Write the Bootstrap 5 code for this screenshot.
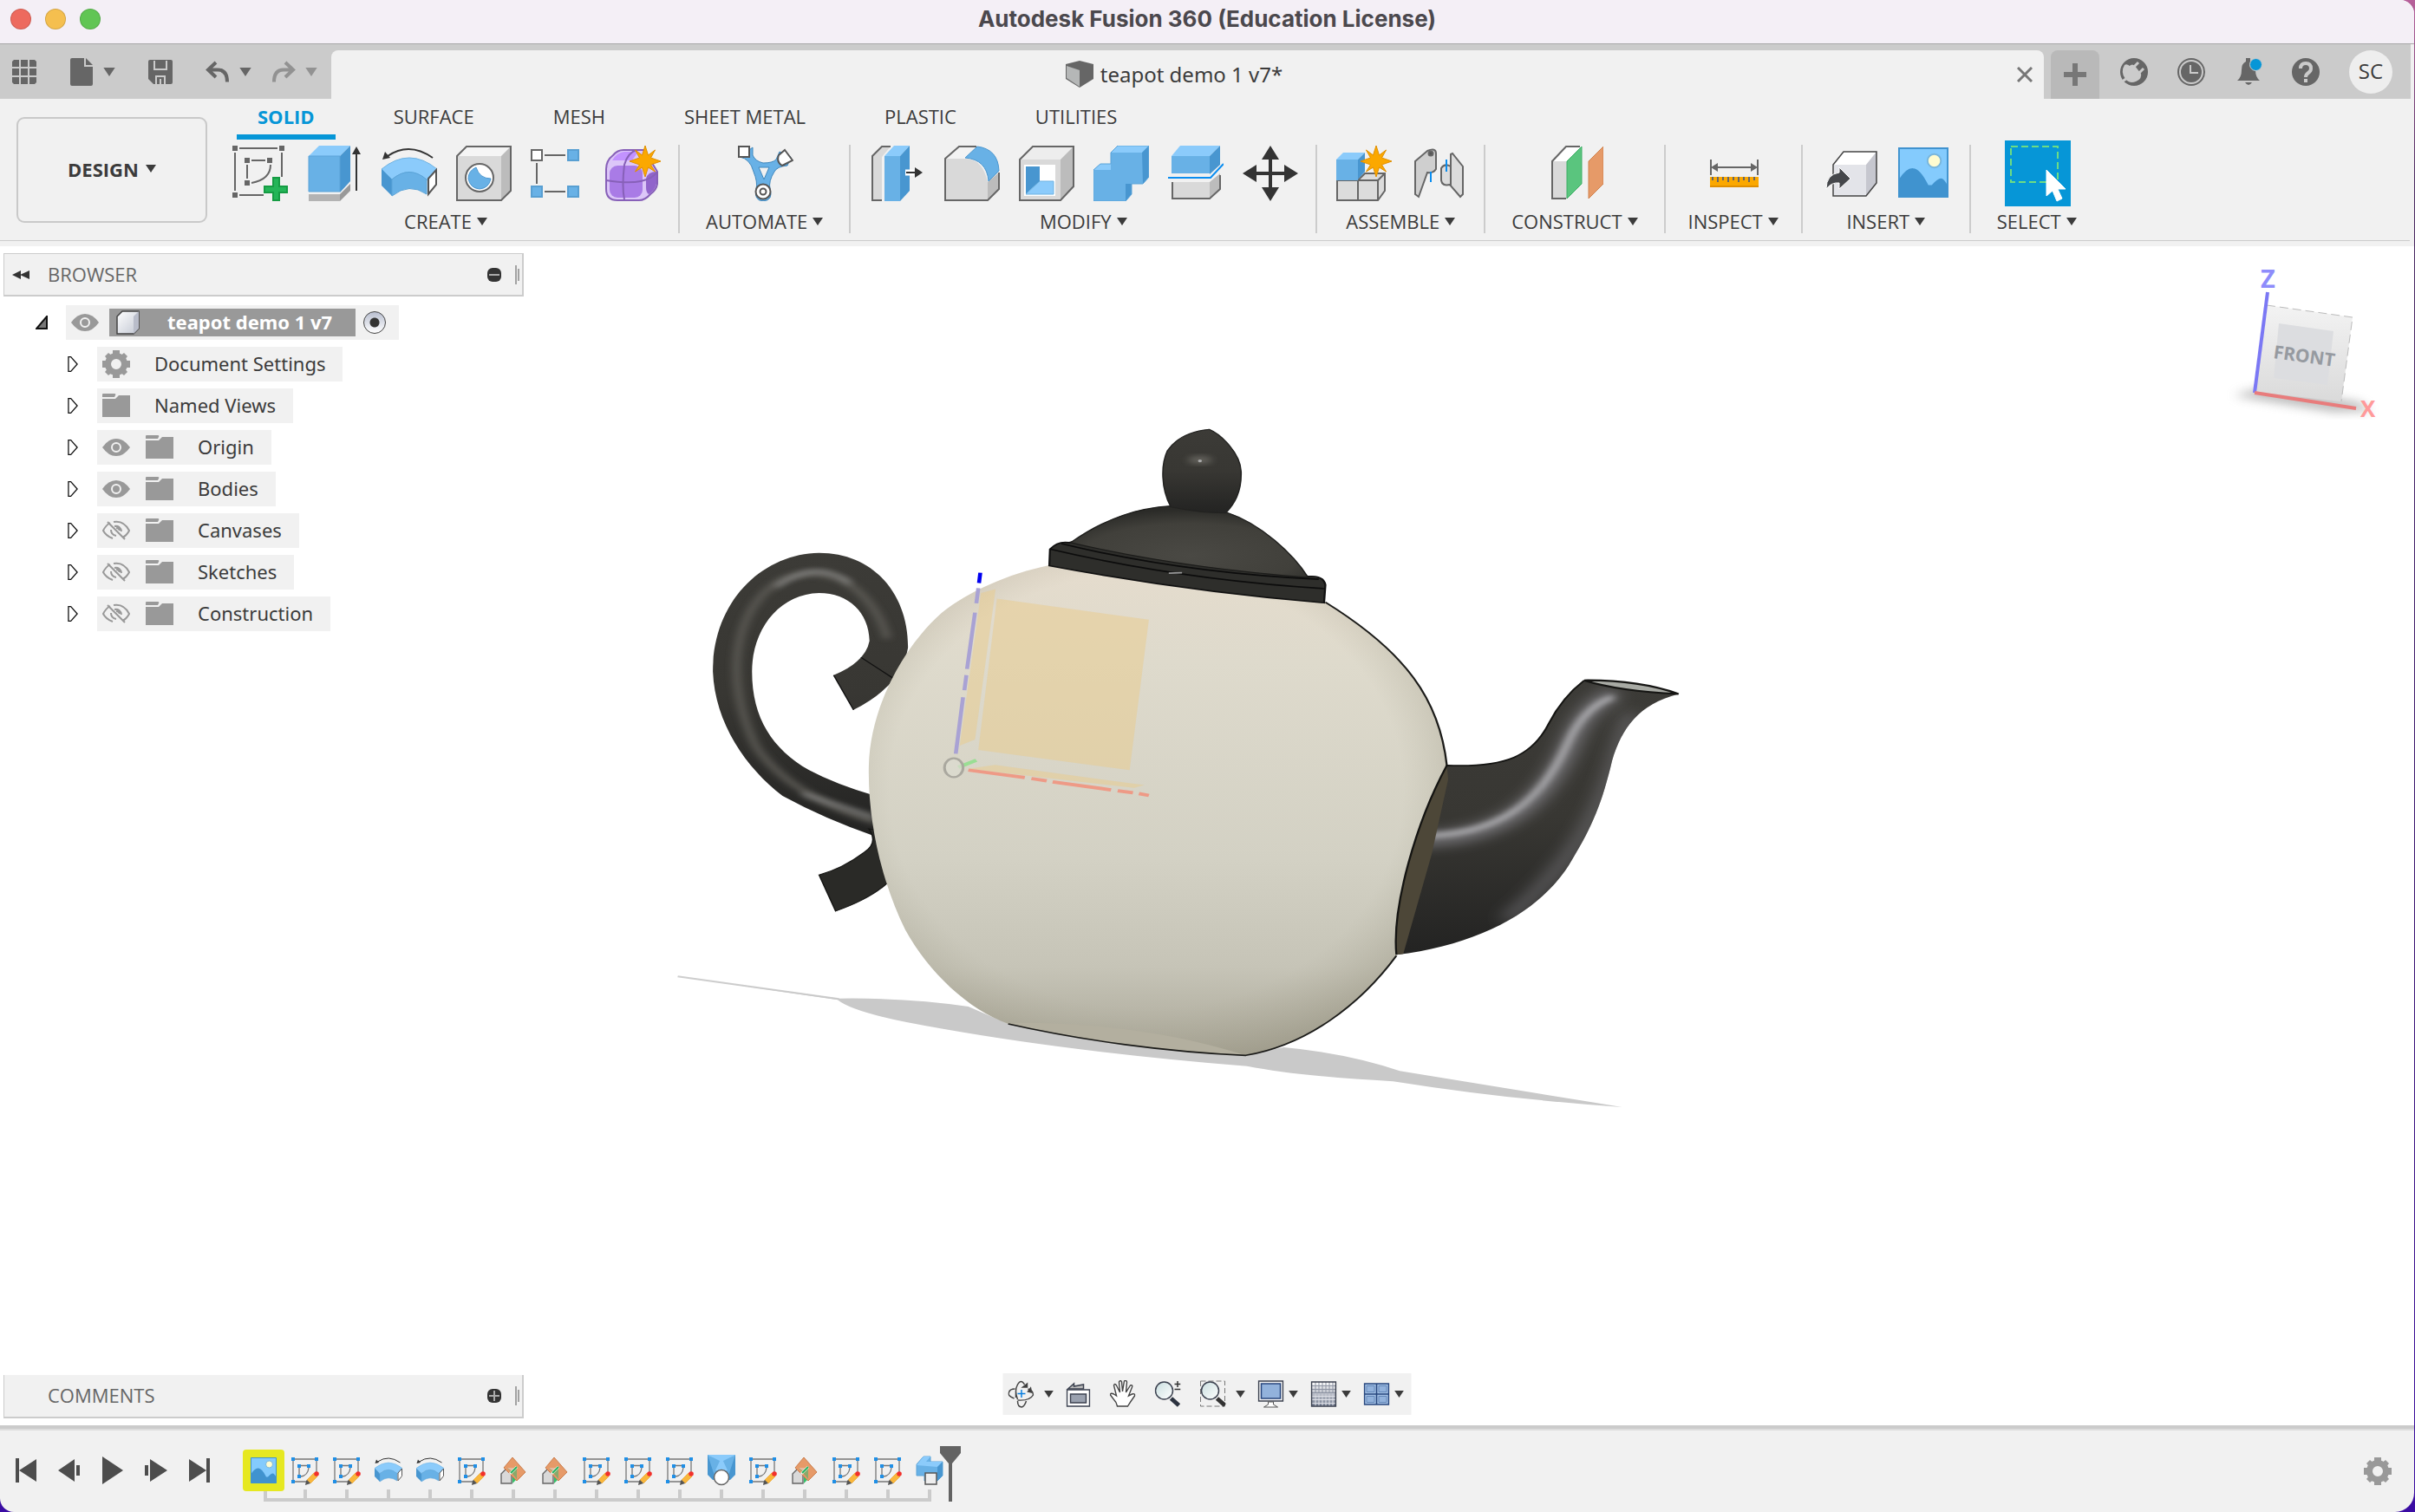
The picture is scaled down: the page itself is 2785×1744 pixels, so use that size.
<!DOCTYPE html>
<html lang="en">
<head>
<meta charset="utf-8">
<meta name="viewport" content="width=device-width, initial-scale=1">
<title>Autodesk Fusion 360 (Education License)</title>
<link href="https://cdn.jsdelivr.net/npm/bootstrap@5.3.0/dist/css/bootstrap.min.css" rel="stylesheet">
<script src="https://cdn.jsdelivr.net/npm/bootstrap@5.3.0/dist/js/bootstrap.bundle.min.js"></script>
<style>
body{font-family:"Open Sans","Noto Sans",sans-serif;font-size:22px;line-height:24px;color:#3b3b3b;background:linear-gradient(#b7609a,#4a2a60 12%,#3a1470 60%,#3a0ca3)}
.app-window{margin-right:1px;background:#f1f1f1;border-radius:0 16px 22px 16px;overflow:hidden}
.app-window .btn{color:inherit;border:0;border-radius:0;padding:0;font-size:22px;line-height:24px;display:inline-flex;align-items:center;justify-content:center}
svg{display:block;flex:none}
.title-strip{height:51px;background:#f4eff6;border-bottom:1px solid #a8a8a8;padding-left:12px}
.title-strip h1{font:700 26px/44px Inter,sans-serif;color:#4b484d}
.light{width:24px;height:24px;border-radius:50%;border:1px solid #0002;padding:0;margin-top:10px;margin-right:16px}
.light-r{background:#ed6a5e}.light-y{background:#f5bf4f}.light-g{background:#61c554}
.doc-strip{height:63px;background:#cbcbcb;margin-right:4px}
.quick{width:382px;padding-left:14px;gap:38px;color:#666}
.quick .pair{gap:11px}
.quick .redo{margin-left:-15px}
.faded{color:#929292}
.doc-tab{margin-top:7px;background:#f1f1f1;border-radius:8px 8px 0 0;padding-right:13px;font:24px/30px "Noto Sans",sans-serif}
.add-tab{margin:7px 0 0 8px;width:56px;background:#b9b9b9!important;border-radius:8px 8px 0 0!important}
.account{padding-left:24px;padding-right:21px;gap:34px;color:#666}
.account .avatar{width:50px;height:50px;border-radius:50%;background:#eee;color:#3b3b3b;font-size:24px;padding-bottom:2px}
.ribbon{height:164px;border-bottom:1px solid #ccc;margin-right:5px}
.app-window .workspace{width:220px;height:122px;margin:21px 7px 0 19px;border:2px solid #c9c9c9;border-radius:9px;font-weight:700;gap:8px;padding-bottom:3px}
.tool-tabs{padding-left:27px;gap:43px}
.tool-tabs a{display:block;padding:5px 24px 6px;line-height:30px;border-bottom:6px solid transparent;color:#3b3b3b;text-decoration:none}
.tool-tabs a.on{font-weight:700;color:#0696d7;border-color:#0696d7}
.tool-groups{margin-top:6px;height:102px}
.tool-group{border-right:2px solid #ccc}
.tool-group:last-child{border:0}
.tool-icons{gap:22px;padding:1px 20px 0 22px}
.app-window .tool-label{gap:6px;margin:0 30px;padding-bottom:2px}
.app-window .tool-label.snug{margin:0 26px}
.pick{margin:-6px;background:#0696d7!important}
.under{height:6px}
.canvas{background:#fff;border-bottom:4px solid #cbcbcb;min-height:0}
.scene{position:absolute;inset:0;width:100%;height:100%}
.palette{width:600px;height:50px;margin-left:4px;background:#f1f1f1;border:1px solid #ccc;border-width:1px 2px 2px 1px;color:#666;padding:0 3px 0 9px}
.palette h2{font-size:22px;line-height:24px;margin:0 0 0 21px;padding-bottom:2px}
.palette .no-toggle{margin-left:41px}
.tree{margin:10px 0 0;padding:0;font-family:"Noto Sans",sans-serif}
.tree li{height:40px;margin-bottom:8px;margin-left:78px}
.tree li.root{margin-left:41px}
.node{height:40px;background:#f1f1f1;padding:0 20px 0 6px;margin-left:22px;gap:18px}
.node span{margin-left:10px;padding-bottom:2px}
.root .node{margin-left:21px;padding-right:15px;gap:0}
.root .chosen{height:32px;margin:0 9px 0 12px;width:284px;background:#999;color:#fff;font-weight:700;padding-left:8px;gap:21px}
.root input{appearance:none;width:26px;height:26px;margin:0;border:1px solid #444;border-radius:50%;background:radial-gradient(circle,#333 5px,#0000 6px),linear-gradient(#b9bfd0,#fff)}
.viewbar{position:absolute;left:50%;bottom:12px;transform:translateX(-50%);height:48px;background:#f1f1f1;padding:0 8px 0 6px}
.viewbar .btn+.btn{margin-left:22px}
.viewbar .btn+.far{margin-left:11px}
.viewbar .btn+.near{margin-left:5px}
.viewbar .near+.btn,.viewbar .far+.btn{margin-left:14px}
.history{height:96px;border-top:2px solid #ddd}
.transport{padding-left:5px}
.transport .btn{width:50px;height:92px;color:#4d4d4d}
.steps{margin:22px 0 0 25px;padding:0;height:60px;position:relative}
.steps::after{content:"";position:absolute;left:24px;right:22px;bottom:0;height:4px;background:#cbcbcb}
.steps li{width:48px;height:60px;position:relative}
.steps li::after{content:"";position:absolute;left:22px;width:4px;top:46px;height:12px;background:#cbcbcb}
.steps li:first-child::after{left:24px}
.steps .btn{width:48px;height:48px;position:relative}
.steps .first{background:#e6e821;border-radius:4px;z-index:1}
.playhead{margin:18px 0 0 -12px;z-index:1}
.history .prefs{margin-right:26px}
</style>
</head>
<body>
<svg width="0" height="0" class="position-absolute" aria-hidden="true">
<defs>
<symbol id="caret" viewBox="0 0 12 9"><path d="M0 0h12L6 9z" fill="currentColor"/></symbol>
<symbol id="gear" viewBox="0 0 32 32"><g fill="#999"><path fill-rule="evenodd" d="M16 3a13 13 0 1 0 0 26a13 13 0 1 0 0-26M16 10a6 6 0 1 1 0 12a6 6 0 1 1 0-12"/><path d="M12 0h8v7h-8zM12 25h8v7h-8zM0 12h7v8H0zM25 12h7v8h-7zM3 7l4-4 5 4-5 5zM20 7l5-4 4 4-4 5zM3 25l4-5 5 5-5 4zM20 25l5-5 4 5-4 4z"/></g></symbol>
<symbol id="folder" viewBox="0 0 32 32"><path d="M0 3q0-1 1-1h13q2 0 1 2l-1 2H0z M0 8h15l4-4h13v25H0z" fill="#999"/></symbol>
<symbol id="eye" viewBox="0 0 32 32"><path d="M0 16Q7 6 16 6t16 10Q25 26 16 26T0 16" fill="#999"/><circle cx="16" cy="16" r="5" fill="#999" stroke="#f1f1f1" stroke-width="2"/></symbol>
<symbol id="eyeoff" viewBox="0 0 32 32"><g fill="none" stroke="#999" stroke-width="2"><path d="M9 7Q4 10 1 16q3 6 11 9M13 6q12-2 18 10-3 6-8 8M10 15q0 6 6 7M14 11q7-1 8 6M16 13q3 0 4 3M6 6l20 20"/></g></symbol>
<symbol id="expand" viewBox="0 0 13 20"><path d="M1 1h3l8 9-8 9H1z" fill="#fff" stroke="#111" stroke-width="1.4"/></symbol>
<symbol id="revolve" viewBox="0 0 64 64"><path d="M0 27Q32 1 64 27L52 40Q32 22 12 39z" fill="#8bcbfb" stroke="#6fb3e2"/><path d="M0 27l12 12v19L0 46z" fill="#4896d0"/><path d="M12 39Q32 22 52 39v17Q32 42 12 58z" fill="#68b1e6" stroke="#5aa3d8"/><path d="M54 38l9-10v17l-9 11z" fill="#fff" stroke="#555" stroke-width="2"/><path d="M59 14Q32-5 7 12" fill="none" stroke="#333" stroke-width="2"/><path d="M1 16L4 7l6 7z" fill="#333"/></symbol>
<symbol id="sketch" viewBox="0 0 32 32"><path d="M4 3h23M2 5v22M29 5v14M4 29h13M11 10.500h7M9 13v8M20 13q-1 9-9 10" fill="none" stroke="#777" stroke-width="1.300"/><path d="M0 1h4v4H0zM27 1h4v4h-4zM0 27h4v4H0zM7 9h4v4H7zM18 9h4v4h-4zM7 21h4v4H7z" fill="#1f8fe6"/><path d="M18 27l8-8 4 4-8 8z" fill="#f9b73c" stroke="#e89a1c" stroke-width=".6"/><path d="M18 27l4 4-6 2 1-5z" fill="#555"/><circle cx="29" cy="20" r="2.800" fill="#f2302b"/></symbol>
<symbol id="plane" viewBox="0 0 32 32"><path d="M2 31V20l6-6h6v17z" fill="#d9d9d9" stroke="#666" stroke-width="1.4"/><path d="M15 31v-9l4-4v9z" fill="#35c069"/><path d="M15 1l15 17-10 10L5 13z" fill="#e69a68" stroke="#ca7d4b"/><path d="M9 13h11v13z" fill="#8aa86b"/><path d="M9 13h11l-5 5z" fill="#e5b9a0"/><path d="M12 20l8-8" stroke="#fff" stroke-width="3"/><path d="M13 19l7-7" stroke="#24b15b" stroke-width="2"/></symbol>
<symbol id="picture" viewBox="0 0 60 60"><path d="M0 0h60v60H0z" fill="#84cbfd"/><path d="M1 38Q10 24 18 25q8 0 18 20l4 0q7-8 11-8 4 0 8 9v13H1z" fill="#4093cf"/><circle cx="43" cy="16" r="8" fill="#fffcd0" stroke="#79b6dc" stroke-width="2"/><path d="M1 1h58v58H1z" fill="none" stroke="#4093cf" stroke-width="2"/></symbol>
<symbol id="spark" viewBox="0 0 36 36"><path d="M18 0l3.500 11 8-6-5 9 11.500 4-11.500 4 5 8-8-5L18 36l-3.500-11-8 5 5-8L0 18l11.500-4-5-9 8 6z" fill="#fba800" stroke="#e08f00"/></symbol>
<linearGradient id="gPlate" x1="0" y1="0" x2="1" y2="1"><stop stop-color="#fff"/><stop offset="1" stop-color="#c3c8d3"/></linearGradient>
<linearGradient id="gGrid" x1="0" y1="0" x2="0" y2="1"><stop stop-color="#fff"/><stop offset="1" stop-color="#717a8e"/></linearGradient>
<linearGradient id="gLens" x1="0" y1="0" x2="1" y2="1"><stop stop-color="#c9dedf"/><stop offset="1" stop-color="#fff"/></linearGradient>
</defs>
</svg>

<div class="app-window vh-100 d-flex flex-column">
<header class="title-strip d-flex position-relative">
<button class="light light-r" aria-label="Close window"></button><button class="light light-y" aria-label="Minimize window"></button><button class="light light-g" aria-label="Zoom window"></button>
<h1 class="position-absolute start-50 translate-middle-x m-0">Autodesk Fusion 360 (Education License)</h1>
</header>

<div class="doc-strip d-flex">
<div class="quick d-flex align-items-center">
<button class="btn" aria-label="Data panel"><svg width="28" height="28" fill="currentColor"><path d="M2 0h6v8H0V2zM10 0h8v8h-8zM20 0h6l2 2v6h-8zM0 10h8v8H0zM10 10h8v8h-8zM20 10h8v8h-8zM0 20h8v8H2l-2-2zM10 20h8v8h-8zM20 20h8v6l-2 2h-6z"/></svg></button>
<button class="btn pair" aria-label="File"><svg width="28" height="32" fill="currentColor"><path d="M3 0h14v10h10v20q0 2-2 2H3q-2 0-2-2V2q0-2 2-2M19 0l8 8h-8z"/></svg><svg width="14" height="10"><use href="#caret"/></svg></button>
<button class="btn" aria-label="Save"><svg width="28" height="28"><path d="M2 0h24q2 0 2 2v24q0 2-2 2H6l-6-6V2q0-2 2-2" fill="currentColor"/><path d="M7 1v10h14V1M9 28v-9h10v9M14 22v6" fill="none" stroke="#cbcbcb" stroke-width="2"/></svg></button>
<button class="btn pair" aria-label="Undo"><svg width="28" height="26" fill="none" stroke="currentColor" stroke-width="4"><path d="M12 2L3 10.500 12 19M4 10.500h10q11 0 11 14"/></svg><svg width="14" height="10"><use href="#caret"/></svg></button>
<button class="btn pair redo" aria-label="Redo"><svg class="faded" width="28" height="26" fill="none" stroke="currentColor" stroke-width="4"><path d="M16 2l9 8.500-9 8.500M24 10.500H14q-11 0-11 14"/></svg><svg class="faded" width="14" height="10"><use href="#caret"/></svg></button>
</div>
<div class="doc-tab flex-grow-1 d-flex align-items-center">
<div class="flex-grow-1 d-flex justify-content-center align-items-center gap-2"><svg width="32" height="32"><path d="M0 4l16-4 16 4v17L16 31 0 21z" fill="#666"/><path d="M1 6l15 5v19L1 20z" fill="#b5b7b7"/></svg><span>teapot demo 1 v7*</span></div>
<button class="btn" aria-label="Close tab"><svg width="18" height="18" stroke="#777" stroke-width="3"><path d="M1 1l16 16M17 1L1 17"/></svg></button>
</div>
<button class="btn add-tab" aria-label="New tab"><svg width="26" height="26" stroke="#777" stroke-width="6"><path d="M13 0v26M0 13h26"/></svg></button>
<div class="account d-flex align-items-center">
<button class="btn" aria-label="Extensions"><svg width="32" height="32"><circle cx="16" cy="16" r="16" fill="#666"/><path d="M5 8q3-2 7 2l9 11q1 3-3 6-7 3-12-3-6-8-1-16" fill="#cbcbcb"/><path d="M9 11q4-6 8-2l7 9q1 5-4 8-6 3-10-3-4-7-1-12" fill="#cbcbcb"/><path d="M15 11l6-6M21 18l6-6" stroke="#cbcbcb" stroke-width="3"/><path d="M1 28l7-5" stroke="#cbcbcb" stroke-width="3"/></svg></button>
<button class="btn" aria-label="Job status"><svg width="32" height="32"><circle cx="16" cy="16" r="15" fill="none" stroke="#666" stroke-width="2"/><circle cx="16" cy="16" r="12" fill="#666"/><path d="M15 8v9h9" fill="none" stroke="#cbcbcb" stroke-width="2"/></svg></button>
<button class="btn" aria-label="Notifications"><svg width="32" height="32"><path d="M3 26q5-4 5-12 0-8 5-10V0h5v4q6 3 6 10 0 8 5 12zM12 28h8q-4 6-8 0" fill="#666"/><circle cx="24.500" cy="7.500" r="7" fill="#0696d7" stroke="#cbcbcb"/></svg></button>
<button class="btn" aria-label="Help"><svg width="32" height="32"><circle cx="16" cy="16" r="16" fill="#666"/><path d="M10 12q0-6 6-6t6 6q0 3-3 5t-3 5" fill="none" stroke="#cbcbcb" stroke-width="4"/><path d="M14 24h4v4h-4z" fill="#cbcbcb"/></svg></button>
<button class="btn avatar">SC</button>
</div>
</div>

<div class="ribbon d-flex align-items-start">
<button class="btn workspace">DESIGN <svg width="12" height="9"><use href="#caret"/></svg></button>
<div>
<nav class="tool-tabs d-flex"><a class="on" href="#">SOLID</a><a href="#">SURFACE</a><a href="#">MESH</a><a href="#">SHEET METAL</a><a href="#">PLASTIC</a><a href="#">UTILITIES</a></nav>
<div class="tool-groups d-flex">
<section class="tool-group d-flex flex-column justify-content-between align-items-center">
<div class="tool-icons d-flex">
<button class="btn" aria-label="Create sketch"><svg width="64" height="64"><path d="M8 3h44M3 8v44M57 8v28M8 57h28M22 17h16M17 22v16M22 43q22-4 22-21" fill="none" stroke="#666" stroke-width="2"/><path d="M0 0h6v6H0zM54 0h6v6h-6zM0 54h6v6H0zM14 14h6v6h-6zM40 14h6v6h-6zM14 40h6v6h-6z" fill="#666"/><path d="M47 37h7v10h9v7h-9v9h-7v-9H37v-7h10z" fill="#24b558" stroke="#169c44" stroke-width="2"/></svg></button>
<button class="btn" aria-label="Extrude"><svg width="64" height="64"><path d="M2 12L14 0h36L38 12z" fill="#8bcbfb"/><path d="M38 12L50 0v41L38 54z" fill="#4896d0"/><path d="M2 12h36v41H2z" fill="#68b1e6" stroke="#5aa3d8"/><path d="M2 56h36v8H2z" fill="#b3b3b3"/><path d="M38 56l12-12v8L38 64z" fill="#999"/><path d="M57 52V8" stroke="#333" stroke-width="2"/><path d="M52 10l5-9 5 9z" fill="#333"/></svg></button>
<button class="btn" aria-label="Revolve"><svg width="64" height="64"><use href="#revolve"/></svg></button>
<button class="btn" aria-label="Hole"><svg width="64" height="64"><path d="M1 12L12 1h51L52 12z" fill="#f5f5f5"/><path d="M52 12L63 1v51L52 63z" fill="#bcbcbc"/><path d="M1 12h51v51H1z" fill="#d9d9d9"/><path d="M1 12L12 1h51v51L52 63H1z" fill="none" stroke="#666" stroke-width="2"/><circle cx="27" cy="37" r="16" fill="#fff" stroke="#666" stroke-width="2"/><path d="M23 25q4 13 17 13-2 11-13 12-11-1-13-12 0-9 9-13" fill="#68b1e6" stroke="#4b97d0"/></svg></button>
<button class="btn" aria-label="Pattern"><svg width="64" height="64"><path d="M16 11h24M7 20v24M16 53h24" stroke="#666" stroke-width="2"/><path d="M1 5h12v12H1z" fill="#fff" stroke="#666" stroke-width="2"/><path d="M43 5h12v12H43zM1 47h12v12H1zM43 47h12v12H43z" fill="#68b1e6" stroke="#589fd2" stroke-width="2"/></svg></button>
<button class="btn" aria-label="Create form"><svg width="64" height="64"><path d="M1 27q0-10 8-16 5-6 12-6h24L60 30v14q-1 7-8 12-6 7-13 7H14Q1 63 1 50z" fill="#dcc6f8" stroke="#8760b8" stroke-width="2"/><path d="M8 17q5-9 14-10h16L31 17z" fill="#c292ff"/><rect x="5" y="23" width="38" height="37" rx="9" fill="#a97be6"/><path d="M47 38q2-8 12-8v14q-2 8-9 12-3-2-3-8z" fill="#9164cb"/><path d="M1 40q25 4 40 1 14-3 19-11M22 62q-3-15 0-40 4-14 14-17" fill="none" stroke="#8760b8" stroke-width="2"/><svg x="28" y="0" width="36" height="36"><use href="#spark"/></svg></svg></button>
</div>
<button class="btn tool-label">CREATE <svg width="12" height="9"><use href="#caret"/></svg></button>
</section>
<section class="tool-group d-flex flex-column justify-content-between align-items-center">
<div class="tool-icons d-flex"><button class="btn" aria-label="Automated modeling"><svg width="64" height="64"><path d="M2 13q12 2 16 17 5 12 3 20-3 13 8 14 12-1 8-14-2-9 5-20 3-6 15-7l4-10-13-6-4 9q-4 4-15 4-9-2-12-9V2z" fill="#68b1e6" stroke="#3f87bd"/><path d="M24 25l12 0-6 14z" fill="#f1f1f1" stroke="#3f87bd"/><path d="M1 1h12v12H1z" fill="#fff" stroke="#555" stroke-width="2"/><path d="M54 5l9 12-12 6q-7-4-4-12z" fill="#fff" stroke="#555" stroke-width="2"/><circle cx="29" cy="53" r="8.500" fill="#fff" stroke="#555" stroke-width="2"/><circle cx="29" cy="53" r="3.500" fill="none" stroke="#555" stroke-width="2"/></svg></button></div>
<button class="btn tool-label">AUTOMATE <svg width="12" height="9"><use href="#caret"/></svg></button>
</section>
<section class="tool-group d-flex flex-column justify-content-between align-items-center">
<div class="tool-icons d-flex">
<button class="btn" aria-label="Press pull"><svg width="64" height="64"><path d="M3 12L14 1h10L14 13v50H3z" fill="#d9d9d9"/><path d="M14 63H3V12L14 1h10" fill="none" stroke="#666" stroke-width="2"/><path d="M17 12L28 0h18L35 12z" fill="#8bcbfb"/><path d="M35 12L46 0v52L35 64z" fill="#4896d0"/><path d="M17 12h18v52H17z" fill="#68b1e6"/><path d="M41 31h10" stroke="#fff" stroke-width="7"/><path d="M42 31h12" stroke="#333" stroke-width="2"/><path d="M52 25l9 6-9 6z" fill="#333"/></svg></button>
<button class="btn" aria-label="Fillet"><svg width="64" height="64"><path d="M1 15L17 1h20L24 15q20 0 26 27l13-11v19L50 63H1z" fill="#d9d9d9"/><path d="M1 15L17 1h20L24 15z" fill="#f3f3f3"/><path d="M50 42l13-11v19L50 63z" fill="#bcbcbc"/><path d="M37 1H17L1 15v48h49l13-13V31" fill="none" stroke="#666" stroke-width="2"/><path d="M24 14L38 1q24 3 25 28L51 41Q49 16 24 14" fill="#68b1e6" stroke="#4b97d0"/></svg></button>
<button class="btn" aria-label="Shell"><svg width="64" height="64"><path d="M1 16L16 1h47v46L48 63H1z" fill="#ededed"/><path d="M48 16L63 1v46L48 63z" fill="#bcbcbc"/><path d="M1 16h47v47H1z" fill="#d9d9d9"/><path d="M1 16L16 1h47v46L48 63H1z" fill="none" stroke="#666" stroke-width="2"/><path d="M6 22h36v36H6z" fill="#fff"/><path d="M8 24h16v17L8 56z" fill="#4896d0"/><path d="M24 41h16v15H8z" fill="#8bcbfb" stroke="#6fb3e2"/></svg></button>
<button class="btn" aria-label="Combine"><svg width="64" height="64"><path d="M0 28l8-7h12V8l8-8h36v36l-7 8H44v12l-7 8H0z" fill="#68b1e6"/><path d="M20 8l8-8h36l-8 8zM0 28l8-7h12v7z" fill="#8bcbfb"/><path d="M56 8l8-8v36l-7 8zM37 44h7v12l-7 8z" fill="#4896d0"/><path d="M0 28l8-7h12V8l8-8h36v36l-7 8H44v12l-7 8H0z" fill="none" stroke="#5aa3d8"/></svg></button>
<button class="btn" aria-label="Split body"><svg width="64" height="64"><path d="M4 12L14 0h46L48 12z" fill="#8bcbfb"/><path d="M48 12L60 0v22L48 33z" fill="#4896d0"/><path d="M4 12h44v20H4z" fill="#68b1e6"/><path d="M0 37h49l15-16" fill="none" stroke="#0a8df0" stroke-width="2"/><path d="M5 42h43v19H5z" fill="#d9d9d9"/><path d="M48 42l12-10v18L48 61z" fill="#bcbcbc"/><path d="M5 42v19h43l12-11V34" fill="none" stroke="#666" stroke-width="2"/></svg></button>
<button class="btn" aria-label="Move"><svg width="64" height="64" fill="#333"><path d="M30 12h4v18h18v4H34v18h-4V34H12v-4h18z"/><path d="M32 0l10 16H22zM32 64L22 48h20zM0 32l16-10v20zM64 32L48 42V22z"/></svg></button>
</div>
<button class="btn tool-label">MODIFY <svg width="12" height="9"><use href="#caret"/></svg></button>
</section>
<section class="tool-group d-flex flex-column justify-content-between align-items-center">
<div class="tool-icons d-flex">
<button class="btn" aria-label="New component"><svg width="64" height="64"><path d="M1 40h24l8-8h23v20L48 63H1z" fill="#dcdcdc" stroke="#666" stroke-width="2"/><path d="M25 40h23l8-8M48 40v23M25 40v23" fill="none" stroke="#666" stroke-width="2"/><path d="M0 16l8-8h25l-8 8z" fill="#8bcbfb"/><path d="M25 16l8-8v22l-8 9z" fill="#4896d0"/><path d="M0 16h25v24H0z" fill="#68b1e6"/><svg x="28" y="0" width="36" height="36"><use href="#spark"/></svg></svg></button>
<button class="btn" aria-label="Joint"><svg width="64" height="64" stroke="#666" stroke-width="2"><path d="M5 18L19 6q10-4 10 3v18q-3 5-10 4l-10 28-4-3z" fill="#cfcfcf"/><circle cx="23" cy="9" r="2.500" fill="#555"/><path d="M46 10l2-1 12 15v32l-3 3-12-14q-9 2-10-5V26q4-6 11-2z" fill="#dcdcdc"/><path d="M46 22v24" /><path d="M23 30v12M41 16v14" stroke="#0a8df0"/></svg></button>
</div>
<button class="btn tool-label">ASSEMBLE <svg width="12" height="9"><use href="#caret"/></svg></button>
</section>
<section class="tool-group d-flex flex-column justify-content-between align-items-center">
<div class="tool-icons d-flex"><button class="btn" aria-label="Offset plane"><svg width="64" height="64"><path d="M5 18L21 1h17L22 18v43H5z" fill="#fff"/><path d="M5 18h17v43H5z" fill="#d9d9d9"/><path d="M21 61H5V18L21 1h16" fill="none" stroke="#666" stroke-width="2"/><path d="M22 18L39 1v43L22 61z" fill="#5ac57e" stroke="#3cae64"/><path d="M47 18L64 1v43L47 61z" fill="#e69a68" stroke="#d0814c"/></svg></button></div>
<button class="btn tool-label">CONSTRUCT <svg width="12" height="9"><use href="#caret"/></svg></button>
</section>
<section class="tool-group d-flex flex-column justify-content-between align-items-center">
<div class="tool-icons d-flex"><button class="btn" aria-label="Measure"><svg width="64" height="64"><path d="M5 16v18M59 16v18M8 25h48" stroke="#666" stroke-width="2"/><path d="M5 25l8-5v10zM59 25l-8-5v10z" fill="#666"/><path d="M4 36h56v12H4z" fill="#fba800"/><path d="M4 46h56v2H4z" fill="#e08f00"/><path d="M7 36v4M13 36v6M19 36v4M25 36v6M31 36v4M37 36v6M43 36v4M49 36v6M55 36v4" stroke="#666" stroke-width="2"/></svg></button></div>
<button class="btn tool-label snug">INSPECT <svg width="12" height="9"><use href="#caret"/></svg></button>
</section>
<section class="tool-group d-flex flex-column justify-content-between align-items-center">
<div class="tool-icons d-flex">
<button class="btn" aria-label="Insert derive"><svg width="64" height="64"><path d="M13 22L25 7h38v36L51 58H13z" fill="#fff"/><path d="M13 22h38v36H13z" fill="#e3e4e9"/><path d="M51 22L63 7v36L51 58z" fill="#c6c7cf"/><path d="M13 22L25 7h38v36L51 58H13z" fill="none" stroke="#444" stroke-width="1.500"/><path d="M5 50q0-17 15-19v-6l13 13-13 12v-7q-9-1-15 7" fill="#45474b" stroke="#fff" stroke-width="1"/></svg></button>
<button class="btn" aria-label="Canvas"><svg width="64" height="64"><svg x="2" y="2" width="58" height="58"><use href="#picture"/></svg></svg></button>
</div>
<button class="btn tool-label">INSERT <svg width="12" height="9"><use href="#caret"/></svg></button>
</section>
<section class="tool-group d-flex flex-column justify-content-between align-items-center">
<div class="tool-icons d-flex"><button class="btn pick" aria-label="Select"><svg width="76" height="76"><path d="M7 7h54v41H7z" fill="none" stroke="#6ddc83" stroke-width="2" stroke-dasharray="8 4"/><path d="M48 34v30l7-6 5 12 6-3-5-11h9z" fill="#fff" stroke="#fff"/></svg></button></div>
<button class="btn tool-label">SELECT <svg width="12" height="9"><use href="#caret"/></svg></button>
</section>
</div>
</div>
</div>
<div class="under"></div>

<main class="canvas flex-grow-1 position-relative d-flex flex-column justify-content-between align-items-start">
<svg class="scene" viewBox="0 284 2784 1360" role="img" aria-label="Teapot model">
<defs>
<linearGradient id="gBody" x1="0" y1="0" x2="0" y2="1"><stop stop-color="#e5dccd"/><stop offset=".2" stop-color="#dedacc"/><stop offset=".6" stop-color="#d3d1c4"/><stop offset=".82" stop-color="#c6c4b7"/><stop offset="1" stop-color="#aaa798"/></linearGradient>
<radialGradient id="gEdge" cx=".48" cy=".46" r=".57"><stop offset=".78" stop-color="#a39f8c" stop-opacity="0"/><stop offset="1" stop-color="#8f8b78" stop-opacity=".38"/></radialGradient>
<linearGradient id="gDark" x1="0" y1="0" x2="0" y2="1"><stop stop-color="#3c3b37"/><stop offset=".5" stop-color="#383733"/><stop offset="1" stop-color="#232322"/></linearGradient>
<radialGradient id="gDome" cx=".5" cy=".7" r=".65"><stop stop-color="#4a4944"/><stop offset=".7" stop-color="#41403b"/><stop offset="1" stop-color="#2b2b28"/></radialGradient>
<linearGradient id="gCube" x1="0" y1="0" x2="0" y2="1"><stop stop-color="#f3f3f3"/><stop offset="1" stop-color="#dadada"/></linearGradient>
<filter id="soft" x="-30%" y="-30%" width="160%" height="160%"><feGaussianBlur stdDeviation="6"/></filter>
<filter id="softer" x="-30%" y="-30%" width="160%" height="160%"><feGaussianBlur stdDeviation="14"/></filter>
<clipPath id="cSpout"><path d="M1161 780C1250 785 1290 760 1315 690Q1335 635 1368 599L1510 628C1450 650 1425 700 1410 770C1395 860 1380 910 1350 980C1310 1080 1220 1160 1085 1183C1078 1080 1115 900 1161 780z"/></clipPath>
<clipPath id="cHandle"><path id="handleTube" d="M298 930Q225 895 160 845C105 785 58 690 55 580C55 430 130 330 215 328C300 328 350 420 349 530Q340 610 267 662L237 588Q285 560 291 515C290 455 260 413 215 413C155 415 114 490 114 580C114 680 145 745 200 790Q240 820 298 844z"/></clipPath>
</defs>
<g transform="translate(780 460) scale(.7653 .5421)">
<path d="M2 1229L245 1277" stroke="#cfcfcf" stroke-width="4"/>
<path d="M2 1229L245 1276Q350 1274 440 1293L500 1330 858 1397 915 1380Q1010 1392 1090 1430L1425 1507Q1250 1490 1080 1452Q940 1442 860 1420Q600 1390 400 1340Q270 1310 243 1279z" fill="#c9c9c9"/>
<use href="#handleTube" fill="url(#gDark)"/>
<g clip-path="url(#cHandle)"><path d="M300 900Q170 845 120 740C70 600 85 440 160 385C240 340 300 420 318 510" fill="none" stroke="#5a5953" stroke-width="12" filter="url(#soft)"/><path d="M150 400Q210 340 262 392M190 840L298 890" fill="none" stroke="#aaa" stroke-width="5" filter="url(#soft)"/></g>
<path d="M278 550l48 44M237 588l30 74" stroke="#111" stroke-width="2"/>
<path d="M290 915Q305 945 283 965Q250 1000 215 1013L240 1090Q300 1060 325 1020L310 920z" fill="#2a2a27" stroke="#151513" stroke-width="2"/>
<path d="M562 354C500 372 440 410 400 455C340 530 292 660 290 780C288 900 310 1030 345 1130C380 1220 440 1300 500 1330C610 1365 740 1390 858 1397C950 1375 1030 1290 1085 1185C1078 1080 1115 900 1161 780C1150 640 1100 540 978 433z" fill="url(#gBody)"/>
<path d="M562 354C500 372 440 410 400 455C340 530 292 660 290 780C288 900 310 1030 345 1130C380 1220 440 1300 500 1330C610 1365 740 1390 858 1397C950 1375 1030 1290 1085 1185C1078 1080 1115 900 1161 780C1150 640 1100 540 978 433z" fill="url(#gEdge)"/>
<path d="M500 1328Q700 1325 858 1397Q690 1385 500 1330" fill="#b3af9f"/>
<path d="M500 1330C610 1365 740 1390 858 1397C950 1375 1030 1290 1085 1185M1161 780C1150 640 1100 540 978 433" fill="none" stroke="#1b1b19" stroke-width="3"/>
<path d="M1161 780C1250 785 1290 760 1315 690Q1335 635 1368 599L1510 628C1450 650 1425 700 1410 770C1395 860 1380 910 1350 980C1310 1080 1220 1160 1085 1183C1078 1080 1115 900 1161 780z" fill="url(#gDark)"/>
<g clip-path="url(#cSpout)"><path d="M1440 670C1405 780 1410 920 1250 1110" fill="none" stroke="#77767a" stroke-width="14" filter="url(#softer)"/><path d="M1110 938C1250 940 1310 850 1345 740Q1370 650 1415 628" fill="none" stroke="#85848a" stroke-width="22" filter="url(#softer)"/><path d="M1120 930C1245 930 1305 850 1342 735Q1367 655 1412 634" fill="none" stroke="#d6d6da" stroke-width="7" filter="url(#soft)"/><path d="M1161 780L1163 810 1138 970 1095 1183h-12C1078 1080 1115 900 1161 780" fill="#4d4738"/></g>
<path d="M1085 1183C1078 1080 1115 900 1161 780C1250 785 1290 760 1315 690Q1335 635 1368 599" fill="none" stroke="#141412" stroke-width="3"/>
<path d="M1368 599Q1450 598 1510 628Q1420 622 1368 599" fill="#a8aaa4" stroke="#151513" stroke-width="4"/>
<path d="M562 355L563 320Q575 302 592 306L600 303 952 378Q975 375 978 396L976 434Q770 410 562 355z" fill="#2e2e2b" stroke="#111" stroke-width="3"/>
<path d="M594 306C650 250 700 232 745 228L830 242C880 265 930 330 952 380Q760 360 594 306" fill="url(#gDome)" stroke="#1c1c1a" stroke-width="2"/>
<path d="M564 320Q760 385 978 404M580 308Q760 370 968 384" fill="none" stroke="#0c0c0c" stroke-width="3"/><path d="M742 371l20-1" stroke="#999" stroke-width="3"/>
<path d="M745 230C730 190 730 140 740 110C755 80 780 68 803 65C820 75 850 115 851 155C852 200 840 225 828 243Q790 243 745 230z" fill="url(#gDark)" stroke="#222220" stroke-width="2"/>
<ellipse cx="789" cy="130" rx="18" ry="8" fill="#66655f" filter="url(#soft)"/><circle cx="789" cy="132" r="3" fill="#aaa"/>
<g fill="#eacb8c" fill-opacity=".5"><path d="M483 425l229 45-29 320-228-43zM459 413l22-8-31 320-23 13zM440 787l40-8 225 43-15 6z"/></g>
<path d="M458 370l-2 22" stroke="#0000f0" stroke-width="6"/><path d="M455 403l-3 32M450 455l-12 120M437 588l-3 32M432 635l-11 120" stroke="#a9a2d4" stroke-width="6"/>
<path d="M440 790l85 16M535 808l23 5M567 815l88 17M665 834l23 4M697 840l15 4" stroke="#ee9a86" stroke-width="7"/>
<path d="M425 784l27-15" stroke="#9ade94" stroke-width="7"/>
<ellipse cx="418" cy="785" rx="14" ry="20" fill="#dddbd0" fill-opacity=".7" stroke="#aaa89f" stroke-width="4"/>
</g>
<path d="M2575 456L2610 447 2720 464 2735 474 2690 475z" fill="#777" opacity=".5" filter="url(#soft)"/>
<path d="M2614 352L2713 366 2700 463 2600 452z" fill="url(#gCube)"/><path d="M2614 352L2713 366 2700 463" fill="none" stroke="#bbb" stroke-dasharray="10 5"/>
<path d="M2628 373L2691 382 2684 444 2622 436z" fill="#dcdde0"/>
<text transform="translate(2621 413) rotate(8)" font-family="Noto Sans, sans-serif" font-weight="700" font-size="21" fill="#969aa0">FRONT</text>
<path d="M2615 337L2600 453" stroke="#7b78f4" stroke-width="4"/><path d="M2600 453L2717 471" stroke="#e87c7c" stroke-width="4"/>
<text x="2607" y="332" font-family="Open Sans, sans-serif" font-weight="700" font-size="29" fill="#8e8cfb">Z</text><text x="2722" y="481" font-family="Open Sans, sans-serif" font-weight="700" font-size="26" fill="#ff9a9a">X</text>
</svg>

<aside class="position-relative pt-2">
<div class="palette d-flex align-items-center">
<button class="btn" aria-label="Collapse browser"><svg width="20" height="10" fill="#333"><path d="M0 5l10-5v10zM9 5l11-5v10z"/></svg></button><h2 class="flex-grow-1">BROWSER</h2>
<button class="btn" aria-label="Hide browser"><svg width="16" height="16"><rect width="16" height="16" rx="6" fill="#333"/><path d="M2 8h12" stroke="#aaa" stroke-width="2"/></svg></button><svg class="ms-3" width="5" height="22" stroke="#888" stroke-width="1.500"><path d="M1 0v22M4 4v14"/></svg>
</div>
<ul class="tree list-unstyled">
<li class="root d-flex align-items-center"><svg width="14" height="16"><path d="M1 15h12V1z" fill="#777" stroke="#111" stroke-width="2"/></svg><div class="node d-flex align-items-center"><svg width="32" height="32"><use href="#eye"/></svg><label class="chosen d-flex align-items-center" for="activeDoc"><svg width="28" height="28"><path d="M1 7l6-6h19v20l-6 6H1z" fill="url(#gPlate)" stroke="#444" stroke-width="1.500"/><path d="M20 7l6-6v20l-6 6z" fill="#b9bdca"/></svg><span>teapot demo 1 v7</span></label><input type="radio" id="activeDoc" checked></div></li>
<li class="d-flex align-items-center"><svg width="12" height="20"><use href="#expand"/></svg><div class="node d-flex align-items-center"><svg width="32" height="32"><use href="#gear"/></svg><span>Document Settings</span></div></li>
<li class="d-flex align-items-center"><svg width="12" height="20"><use href="#expand"/></svg><div class="node d-flex align-items-center"><svg width="32" height="32"><use href="#folder"/></svg><span>Named Views</span></div></li>
<li class="d-flex align-items-center"><svg width="12" height="20"><use href="#expand"/></svg><div class="node d-flex align-items-center"><svg width="32" height="32"><use href="#eye"/></svg><svg width="32" height="32"><use href="#folder"/></svg><span>Origin</span></div></li>
<li class="d-flex align-items-center"><svg width="12" height="20"><use href="#expand"/></svg><div class="node d-flex align-items-center"><svg width="32" height="32"><use href="#eye"/></svg><svg width="32" height="32"><use href="#folder"/></svg><span>Bodies</span></div></li>
<li class="d-flex align-items-center"><svg width="12" height="20"><use href="#expand"/></svg><div class="node d-flex align-items-center"><svg width="32" height="32"><use href="#eyeoff"/></svg><svg width="32" height="32"><use href="#folder"/></svg><span>Canvases</span></div></li>
<li class="d-flex align-items-center"><svg width="12" height="20"><use href="#expand"/></svg><div class="node d-flex align-items-center"><svg width="32" height="32"><use href="#eyeoff"/></svg><svg width="32" height="32"><use href="#folder"/></svg><span>Sketches</span></div></li>
<li class="d-flex align-items-center"><svg width="12" height="20"><use href="#expand"/></svg><div class="node d-flex align-items-center"><svg width="32" height="32"><use href="#eyeoff"/></svg><svg width="32" height="32"><use href="#folder"/></svg><span>Construction</span></div></li>
</ul>
</aside>

<aside class="position-relative pb-2">
<div class="palette border-top-0 d-flex align-items-center"><h2 class="flex-grow-1 no-toggle">COMMENTS</h2>
<button class="btn" aria-label="Show comments"><svg width="16" height="16"><rect width="16" height="16" rx="6" fill="#333"/><path d="M2 8h12M8 2v12" stroke="#aaa" stroke-width="2"/></svg></button><svg class="ms-3" width="5" height="22" stroke="#888" stroke-width="1.500"><path d="M1 0v22M4 4v14"/></svg></div>
</aside>

<div class="viewbar d-flex align-items-center">
<button class="btn" aria-label="Orbit"><svg width="30" height="32" fill="none" stroke="#444" stroke-width="1.500"><path d="M11 22Q7 12 11 5q4-7 8 0M11 24q0 7 5 7 3-1 5-7M7 21Q-1 18 1 14q1-4 7-4M11 23q14 1 18-6 0-5-6-7M9 12v8"/><path d="M17 8h5V4zM23 13l3-4 1 5z" fill="#333"/><path d="M15.500 11v9M11 15.500h9" stroke="#0a7fe0"/></svg></button>
<button class="btn far" aria-label="Orbit options"><svg width="12" height="8"><use href="#caret"/></svg></button>
<button class="btn" aria-label="Look at"><svg width="28" height="30" stroke="#3c4250" stroke-width="1.500"><path d="M2 9l7-6v3l11-2v5z" fill="#bbb"/><path d="M1 10h26v19H1z" fill="#fff"/><path d="M5 15h18v10H5z" fill="#9aa1af"/></svg></button>
<button class="btn" aria-label="Pan"><svg width="30" height="32"><path d="M9 30q-1-5-5-9L1 17q0-3 4-1l3 2L5 6q1-3 3 0l4 8-1-12q2-3 3 0l1 11 2-12q2-2 3 1l-1 12 5-8q3-1 2 2l-4 10 4-2q4-1 3 2-5 7-8 12z" fill="#fff" stroke="#444" stroke-width="1.400"/></svg></button>
<button class="btn" aria-label="Zoom"><svg width="30" height="32"><path d="M19 21l9 8" stroke="#2c3340" stroke-width="5"/><circle cx="11" cy="12" r="10" fill="url(#gLens)" stroke="#3c4250" stroke-width="1.500"/><path d="M23 4.500h7M26.500 1v7M23 10.500h7" stroke="#333" stroke-width="1.500"/></svg></button>
<button class="btn" aria-label="Zoom window"><svg width="30" height="32"><path d="M1 1h28v29H1z" fill="none" stroke="#777" stroke-dasharray="6 3"/><path d="M20 21l9 8" stroke="#333" stroke-width="5"/><circle cx="12" cy="12" r="10" fill="url(#gLens)" stroke="#3c4250" stroke-width="1.500"/></svg></button>
<button class="btn far" aria-label="Zoom options"><svg width="12" height="8"><use href="#caret"/></svg></button>
<button class="btn" aria-label="Display settings"><svg width="30" height="32"><path d="M1 1h28v23H1z" fill="#f4f4f4" stroke="#3c4250" stroke-width="1.500"/><path d="M4 4h22v17H4z" fill="#92b2dc" stroke="#27467e" stroke-width="1.500"/><path d="M12 25h6v3l5 3H7l5-3z" fill="#fff" stroke="#555"/></svg></button>
<button class="btn near" aria-label="Display options"><svg width="12" height="8"><use href="#caret"/></svg></button>
<button class="btn" aria-label="Grid and snaps"><svg width="30" height="32"><path d="M1 2h28v28H1z" fill="url(#gGrid)"/><path d="M5.500 2v28M9.500 2v28M13.500 2v28M17.500 2v28M21.500 2v28M25.500 2v28M1 6.500h28M1 10.500h28M1 14.500h28" stroke="#8d93a2"/><path d="M5.500 15v15M9.500 15v15M13.500 15v15M17.500 15v15M21.500 15v15M25.500 15v15M1 18.500h28M1 22.500h28M1 26.500h28" stroke="#dfe1e8"/><path d="M1 2h28v28H1z" fill="none" stroke="#3c4250" stroke-width="1.500"/></svg></button>
<button class="btn near" aria-label="Grid options"><svg width="12" height="8"><use href="#caret"/></svg></button>
<button class="btn" aria-label="Viewports"><svg width="30" height="26"><path d="M1 1h28v24H1zM15 1v24M1 13h28" fill="#a3c0e4" stroke="#27467e" stroke-width="1.500"/><path d="M3.500 3.500h9v7h-9zM17.500 3.500h9v7h-9zM3.500 15.500h9v7h-9zM17.500 15.500h9v7h-9z" fill="#92b2dc" stroke="#6488ba"/></svg></button>
<button class="btn near" aria-label="Viewport options"><svg width="12" height="8"><use href="#caret"/></svg></button>
</div>
</main>

<footer class="history d-flex align-items-start">
<div class="transport d-flex">
<button class="btn" aria-label="Go to start"><svg width="28" height="32" fill="currentColor"><path d="M2 2h4v28H2zM6 16L26 3v26z"/></svg></button>
<button class="btn" aria-label="Step back"><svg width="28" height="32" fill="currentColor"><path d="M1 16L20 3v26zM22 10h4v12h-4z"/></svg></button>
<button class="btn" aria-label="Play"><svg width="28" height="32" fill="currentColor"><path d="M2 0l24 16L2 32z"/></svg></button>
<button class="btn" aria-label="Step forward"><svg width="28" height="32" fill="currentColor"><path d="M1 10h4v12H1zM7 3l20 13L7 29z"/></svg></button>
<button class="btn" aria-label="Go to end"><svg width="28" height="32" fill="currentColor"><path d="M2 3l20 13L2 29zM22 2h4v28h-4z"/></svg></button>
</div>
<ol class="steps list-unstyled d-flex">
<li><button class="btn first" aria-label="Canvas"><svg width="30" height="30"><use href="#picture"/></svg></button></li>
<li><button class="btn" aria-label="Sketch"><svg width="32" height="34"><use href="#sketch"/></svg></button></li>
<li><button class="btn" aria-label="Sketch"><svg width="32" height="34"><use href="#sketch"/></svg></button></li>
<li><button class="btn" aria-label="Revolve"><svg width="32" height="32"><use href="#revolve"/></svg></button></li>
<li><button class="btn" aria-label="Revolve"><svg width="32" height="32"><use href="#revolve"/></svg></button></li>
<li><button class="btn" aria-label="Sketch"><svg width="32" height="34"><use href="#sketch"/></svg></button></li>
<li><button class="btn" aria-label="Plane"><svg width="32" height="32"><use href="#plane"/></svg></button></li>
<li><button class="btn" aria-label="Plane"><svg width="32" height="32"><use href="#plane"/></svg></button></li>
<li><button class="btn" aria-label="Sketch"><svg width="32" height="34"><use href="#sketch"/></svg></button></li>
<li><button class="btn" aria-label="Sketch"><svg width="32" height="34"><use href="#sketch"/></svg></button></li>
<li><button class="btn" aria-label="Sketch"><svg width="32" height="34"><use href="#sketch"/></svg></button></li>
<li><button class="btn" aria-label="Loft"><svg width="32" height="36"><path d="M0 0h32v23l-6 6H6l-6-6z" fill="#4896d0"/><path d="M0 0h32L23 27H9z" fill="#68b1e6"/><path d="M1 1h30L16 6zM16 3l7 15H9z" fill="#8bcbfb"/><path d="M0 0h32L16 8z" fill="#8bcbfb"/><circle cx="16" cy="26" r="8.500" fill="#fff" stroke="#666" stroke-width="1.500"/></svg></button></li>
<li><button class="btn" aria-label="Sketch"><svg width="32" height="34"><use href="#sketch"/></svg></button></li>
<li><button class="btn" aria-label="Plane"><svg width="32" height="32"><use href="#plane"/></svg></button></li>
<li><button class="btn" aria-label="Sketch"><svg width="32" height="34"><use href="#sketch"/></svg></button></li>
<li><button class="btn" aria-label="Sketch"><svg width="32" height="34"><use href="#sketch"/></svg></button></li>
<li><button class="btn" aria-label="Combine"><svg width="32" height="34"><path d="M1 10l8-9h8v6h14v16l-6 6H10v-6H1z" fill="#68b1e6" stroke="#5aa3d8"/><path d="M1 11l8-10h8l-5 6h19l-6 6z" fill="#8bcbfb"/><path d="M25 13l6-6v16l-6 6z" fill="#4896d0"/><path d="M11 20h13v13H11z" fill="#eee" stroke="#555" stroke-width="1.500"/></svg></button></li>
</ol>
<svg class="playhead" width="24" height="64" fill="#636363"><path d="M0 0h24v8L14 20v44h-4V20L0 8z"/></svg>
<button class="btn prefs ms-auto align-self-center" aria-label="Timeline settings"><svg width="32" height="32"><use href="#gear"/></svg></button>
</footer>
</div>
</body>
</html>
